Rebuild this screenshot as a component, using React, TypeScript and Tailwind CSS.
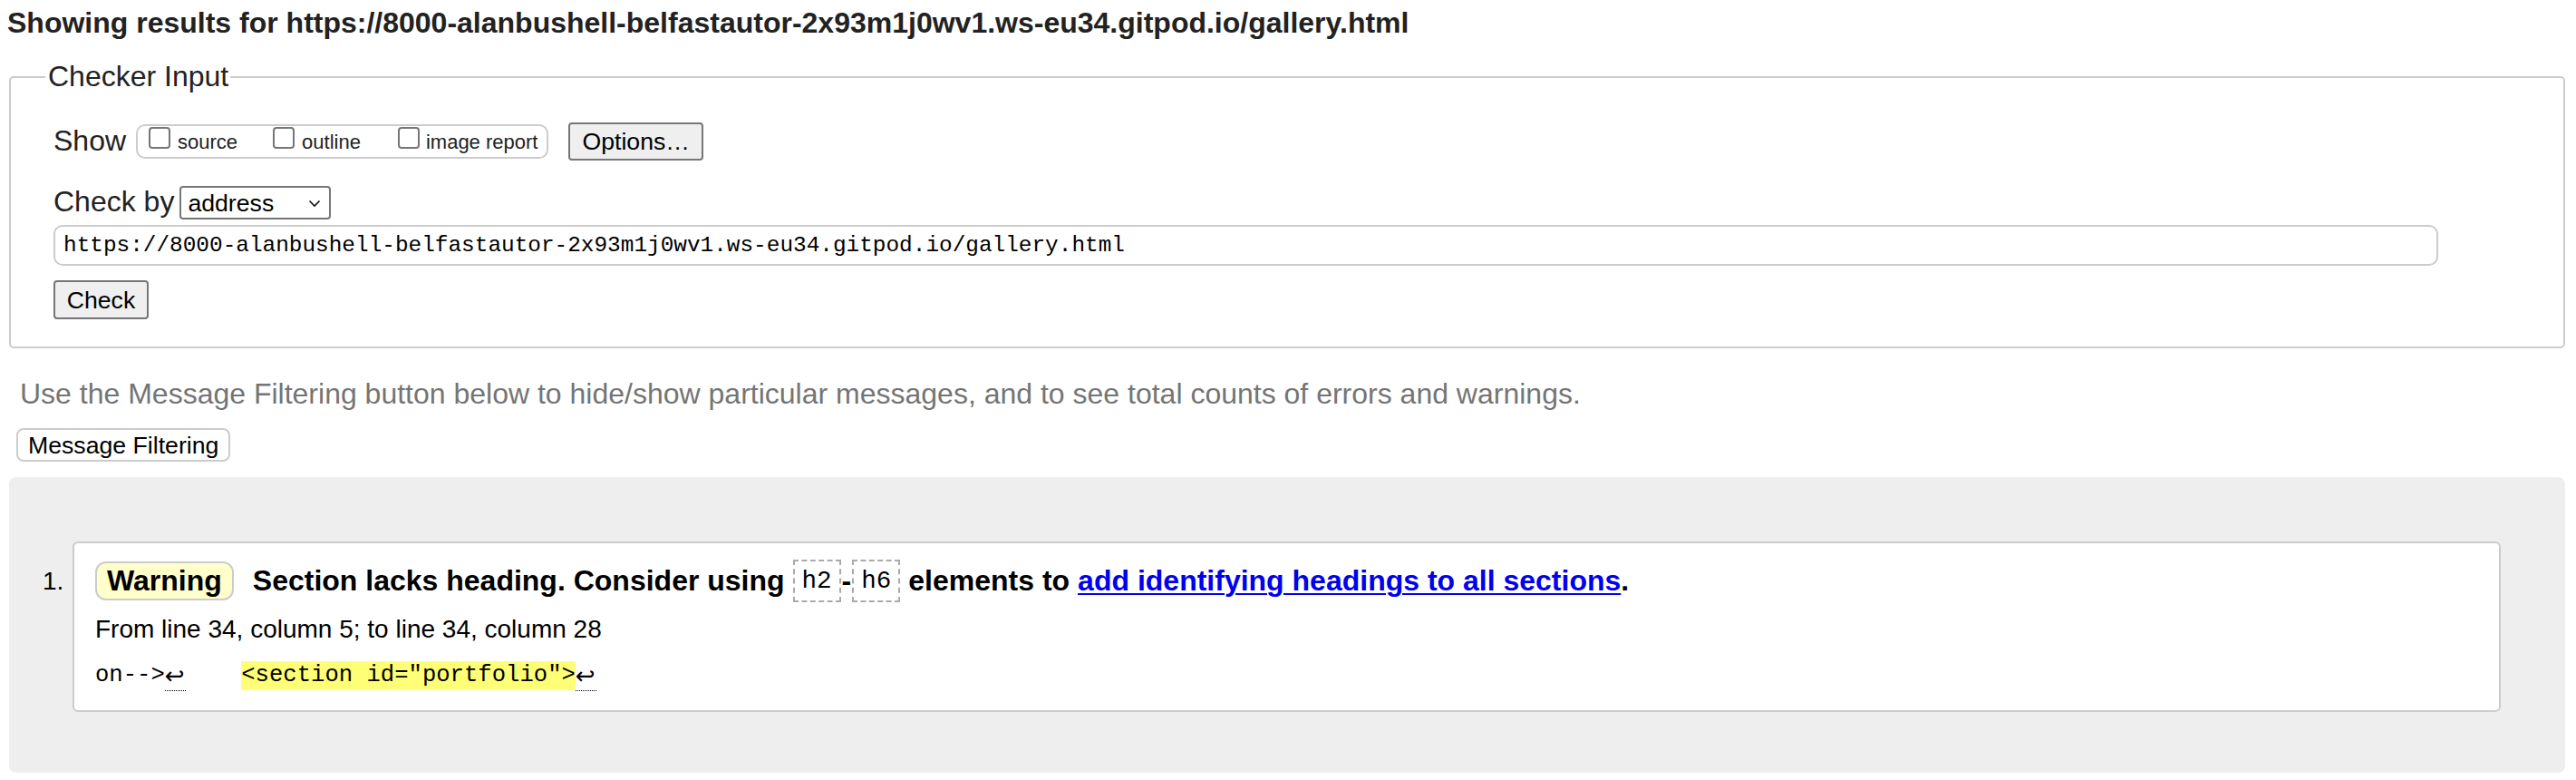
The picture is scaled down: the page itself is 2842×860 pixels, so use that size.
import React from "react";

const sans = "font-['Liberation_Sans',Arial,sans-serif]";
const mono = "font-['Liberation_Mono','DejaVu_Sans_Mono',monospace]";

function Checkbox() {
  return (
    <span className="self-start mt-[1px] w-[24px] h-[24px] shrink-0 border-2 border-[#767676] rounded-[4px] bg-white" />
  );
}

function CodeBox({ children }: { children: React.ReactNode }) {
  return (
    <span
      className={`${mono} h-[47px] flex items-center px-[8px] border-2 border-dashed border-[#aaaaaa] text-[27.5px] leading-[31px] font-normal text-black`}
    >
      {children}
    </span>
  );
}

function ReturnMark() {
  return (
    <span className="inline-block w-[23px] h-[33px] align-top border-b border-dotted border-black font-['DejaVu_Sans',sans-serif] text-[26px] leading-[32px] text-black overflow-visible">
      ↩
    </span>
  );
}

export default function App() {
  return (
    <div className={`${sans} bg-white text-[#222] min-h-[860px] w-[2842px]`}>
      <h2 className="text-[32px] leading-[37px] font-bold pl-[8px] pt-[7px] text-[#222]">
        Showing results for https://8000-alanbushell-belfastautor-2x93m1j0wv1.ws-eu34.gitpod.io/gallery.html
      </h2>

      <fieldset className="mt-[22px] ml-[10px] mr-[12px] border-2 border-[#cccccc] rounded-[5px] pl-[47px] pt-[32px] pb-[30px]">
        <legend className="ml-[-9px] pl-[3px] pr-[2px] text-[32px] leading-[37px] text-[#222]">
          Checker Input
        </legend>

        <div className="flex items-center h-[42px]">
          <span className="text-[32px] leading-[37px] mb-[2px]">Show</span>
          <div className="ml-[11px] flex items-center h-[38px] border-2 border-[#cccccc] rounded-[10px] pl-[12px] pr-[10px]">
            <Checkbox />
            <span className="ml-[8px] text-[22px] leading-[25px]">source</span>
            <span className="ml-[39px] flex self-stretch">
              <Checkbox />
            </span>
            <span className="ml-[8px] text-[22px] leading-[25px]">outline</span>
            <span className="ml-[41px] flex self-stretch">
              <Checkbox />
            </span>
            <span className="ml-[7px] text-[22px] leading-[25px]">image report</span>
          </div>
          <button className="ml-[22px] h-[42px] px-[13px] bg-[#efefef] border-2 border-[#767676] rounded-[4px] text-[26.67px] leading-[30px] text-black">
            Options…
          </button>
        </div>

        <div className="mt-[28px] flex items-center h-[37px]">
          <span className="text-[32px] leading-[37px] mb-[2px]">Check by</span>
          <div className="ml-[6px] w-[167px] h-[37px] border-2 border-[#767676] rounded-[4px] bg-white flex items-center justify-between pl-[7px] pr-[9px]">
            <span className="text-[26.67px] leading-[30px] text-black">address</span>
            <svg width="14" height="9" viewBox="0 0 14 9" className="mt-[1px]">
              <polyline points="1.5,1.5 7,7 12.5,1.5" fill="none" stroke="#111" strokeWidth="1.6" />
            </svg>
          </div>
        </div>

        <div className="mt-[6px] w-[2631px] h-[45px] border-2 border-[#cccccc] rounded-[10px] bg-white flex items-center pl-[9px]">
          <span className={`${mono} text-[24.4px] leading-[28px] text-black`}>
            https://8000-alanbushell-belfastautor-2x93m1j0wv1.ws-eu34.gitpod.io/gallery.html
          </span>
        </div>

        <button className="mt-[16px] h-[43px] w-[105px] bg-[#efefef] border-2 border-[#767676] rounded-[4px] text-[26.67px] leading-[30px] text-black">
          Check
        </button>
      </fieldset>

      <p className="mt-[32px] ml-[22px] text-[32px] leading-[37px] text-[#757575]">
        Use the Message Filtering button below to hide/show particular messages, and to see total counts of errors and warnings.
      </p>

      <button className="mt-[19px] ml-[18px] h-[37px] px-[11px] bg-white border-2 border-[#cccccc] rounded-[8px] text-[26.67px] leading-[30px] text-black">
        Message Filtering
      </button>

      <div className="mt-[17px] ml-[10px] mr-[12px] bg-[#eeeeee] rounded-[8px] pt-[71px] pb-[67px] pl-[37px] pr-[71px] flex items-start">
        <span className="w-[33px] shrink-0 mt-[28px] text-[28px] leading-[32px] text-black">1.</span>
        <div className="flex-1 bg-white border-2 border-[#cccccc] rounded-[6px] pl-[23px] pt-[18px] pb-[21px]">
          <div className="flex items-center h-[47px] text-black">
            <span className="h-[43px] flex items-center px-[11px] bg-[#ffffcc] border-2 border-[#cccccc] rounded-[12px] text-[32px] leading-[37px] font-bold text-black">
              Warning
            </span>
            <span className="ml-[21px] text-[32px] leading-[37px] font-bold">
              Section lacks heading. Consider using
            </span>
            <span className="ml-[9px]">
              <CodeBox>h2</CodeBox>
            </span>
            <span className="ml-[1px] text-[32px] leading-[37px] font-bold">-</span>
            <span className="ml-[1px]">
              <CodeBox>h6</CodeBox>
            </span>
            <span className="ml-[9px] text-[32px] leading-[37px] font-bold">elements to</span>
            <a
              href="#"
              className="ml-[9px] text-[32px] leading-[37px] font-bold text-[#0000ee] underline decoration-2 underline-offset-[3px]"
            >
              add identifying headings to all sections
            </a>
            <span className="text-[32px] leading-[37px] font-bold">.</span>
          </div>

          <p className="mt-[14px] text-[28px] leading-[32px] text-black">
            From line 34, column 5; to line 34, column 28
          </p>

          <div className={`${mono} mt-[19px] whitespace-pre text-[25.6px] leading-[32px] text-black h-[33px]`}>
            <span className="inline-block align-top">on--&gt;</span>
            <ReturnMark />
            <span className="inline-block align-top">    </span>
            <span className="inline-block align-top bg-[#ffff77] leading-[32px]">&lt;section id="portfolio"&gt;</span>
            <ReturnMark />
          </div>
        </div>
      </div>
    </div>
  );
}
